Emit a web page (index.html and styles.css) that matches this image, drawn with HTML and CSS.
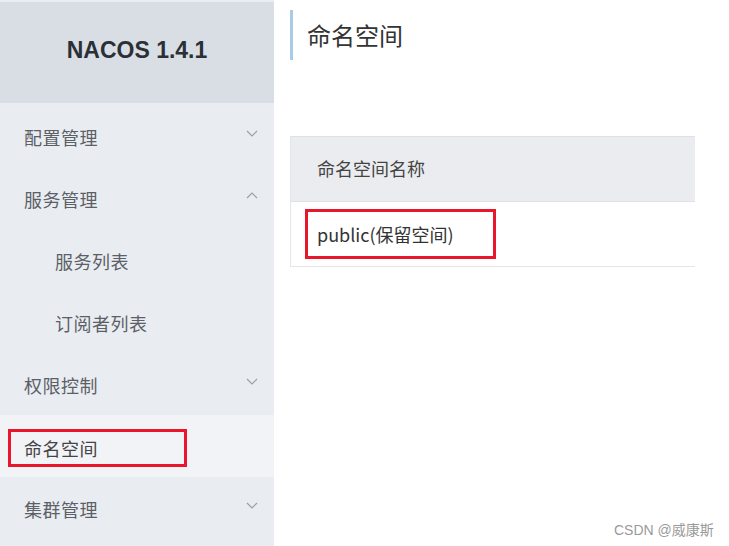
FILE: index.html
```html
<!DOCTYPE html>
<html>
<head>
<meta charset="utf-8">
<link rel="stylesheet" href="styles.css">
</head>
<body>
<div class="app">
  <aside class="sidebar">
    <div class="brand">NACOS 1.4.1</div>
    <ul class="menu">
      <li class="item"><span>配置管理</span><svg class="chev" width="12" height="7" viewBox="0 0 12 7"><path d="M1 1l5 5 5-5" fill="none" stroke="#9aa0a8" stroke-width="1.2"/></svg></li>
      <li class="item"><span>服务管理</span><svg class="chev" width="12" height="7" viewBox="0 0 12 7"><path d="M1 6l5-5 5 5" fill="none" stroke="#9aa0a8" stroke-width="1.2"/></svg></li>
      <li class="item sub"><span>服务列表</span></li>
      <li class="item sub"><span>订阅者列表</span></li>
      <li class="item"><span>权限控制</span><svg class="chev" width="12" height="7" viewBox="0 0 12 7"><path d="M1 1l5 5 5-5" fill="none" stroke="#9aa0a8" stroke-width="1.2"/></svg></li>
      <li class="item active"><span class="mark">命名空间</span></li>
      <li class="item"><span>集群管理</span><svg class="chev" width="12" height="7" viewBox="0 0 12 7"><path d="M1 1l5 5 5-5" fill="none" stroke="#9aa0a8" stroke-width="1.2"/></svg></li>
    </ul>
  </aside>
  <main class="main">
    <h1 class="title">命名空间</h1>
    <div class="table">
      <div class="thead">命名空间名称</div>
      <div class="trow"><span class="mark2">public(保留空间)</span></div>
    </div>
  </main>
</div>
<div class="watermark">CSDN @威康斯</div>
</body>
</html>
```
FILE: styles.css
```css
html, body {
  margin: 0;
  padding: 0;
  background: #fff;
  font-family: "Noto Sans CJK SC", "Noto Sans", sans-serif;
  color: #333;
}
.app {
  display: flex;
  width: 729px;
  height: 546px;
  overflow: hidden;
}
.sidebar {
  width: 274px;
  flex: none;
  background: #e9ecf1;
  display: flex;
  flex-direction: column;
}
.brand {
  height: 101px;
  margin-top: 2px;
  background: #d9dee5;
  display: flex;
  align-items: center;
  justify-content: center;
  font-family: "Liberation Sans", Arial, sans-serif;
  font-weight: 700;
  font-size: 23px;
  color: #2b2f36;
  padding-bottom: 4px;
  box-sizing: border-box;
}
.menu {
  list-style: none;
  margin: 0;
  padding: 2px 0 0;
}
.item {
  height: 62px;
  display: flex;
  align-items: center;
  justify-content: space-between;
  padding: 2px 16px 0 24px;
  box-sizing: border-box;
  font-size: 18px;
  letter-spacing: 0.5px;
  color: #5c5f66;
}
.item.sub {
  padding-left: 55px;
}
.chev {
  margin-top: -7px;
}
.item.active {
  background: #f1f3f7;
  padding-left: 8px;
}
.mark {
  border: 3px solid #e8172b;
  height: 32px;
  width: 160px;
  display: flex;
  align-items: center;
  padding-left: 13px;
  box-sizing: content-box;
  margin-top: 2px;
  color: #444;
}
.main {
  flex: 1;
  padding: 10px 0 0 16px;
}
.title {
  margin: 0;
  border-left: 3px solid #a9cbe9;
  height: 50px;
  padding-left: 14px;
  font-weight: 400;
  font-size: 24px;
  line-height: 50px;
  color: #333;
}
.table {
  margin-top: 76px;
  width: 404px;
  border-left: 1px solid #e3e5e9;
  border-bottom: 1px solid #e3e5e9;
}
.thead {
  background: #ebecf0;
  border-top: 1px solid #dfe1e6;
  border-bottom: 1px solid #dfe1e6;
  display: flex;
  align-items: center;
  padding: 0 0 3px 26px;
  font-size: 18px;
  color: #444;
  box-sizing: border-box;
  height: 66px;
}
.trow {
  height: 64px;
  display: flex;
  align-items: center;
  padding-left: 14px;
}
.mark2 {
  border: 3px solid #e8172b;
  display: flex;
  align-items: center;
  padding-left: 9px;
  font-size: 18px;
  color: #333;
  box-sizing: border-box;
  width: 191px;
  height: 50px;
}
.watermark {
  position: absolute;
  left: 614px;
  top: 519px;
  font-size: 14px;
  color: #9a9a9a;
  font-family: "Liberation Sans", "Noto Sans CJK SC", sans-serif;
}
```
